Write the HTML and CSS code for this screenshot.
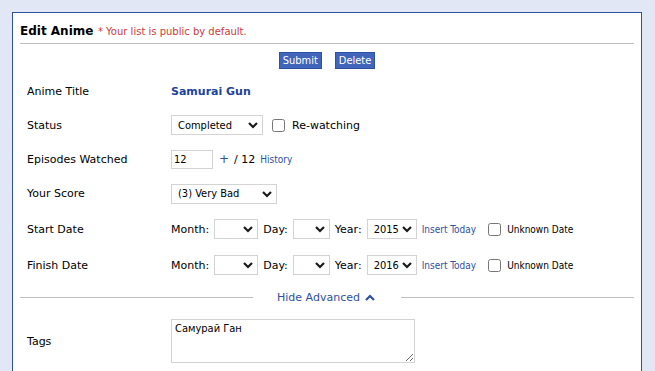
FILE: index.html
```html
<!DOCTYPE html>
<html lang="en">
<head>
  <meta charset="UTF-8">
  <meta name="viewport" content="width=device-width, initial-scale=1.0">
  <title>Edit Anime</title>
  <link rel="stylesheet" href="styles.css">
</head>
<body>
  <div class="panel">
    <div class="panel-head">
      <span class="panel-title">Edit Anime</span>
      <span class="notice">* Your list is public by default.</span>
    </div>

    <div class="actions">
      <button class="btn">Submit</button>
      <button class="btn">Delete</button>
    </div>

    <!-- Main fields -->
    <div class="row">
      <div class="label">Anime Title</div>
      <div class="value"><a class="anime-title" href="#">Samurai Gun</a></div>
    </div>
    <div class="row">
      <div class="label">Status</div>
      <div class="value">
        <span class="select w-status">
          <select><option>Completed</option></select>
          <svg class="caret" width="10" height="7" viewBox="0 0 10 7"><polyline points="1,1 5,5 9,1" /></svg>
        </span>
        <label class="check big"><input type="checkbox"> Re-watching</label>
      </div>
    </div>
    <div class="row">
      <div class="label">Episodes Watched</div>
      <div class="value">
        <input class="text-input" type="text" value="12">
        <a class="plus" href="#">+</a>
        <span>/ 12</span>
        <a class="small-link" href="#">History</a>
      </div>
    </div>
    <div class="row mid">
      <div class="label">Your Score</div>
      <div class="value">
        <span class="select w-score">
          <select><option>(3) Very Bad</option></select>
          <svg class="caret" width="10" height="7" viewBox="0 0 10 7"><polyline points="1,1 5,5 9,1" /></svg>
        </span>
      </div>
    </div>
    <div class="row tall">
      <div class="label">Start Date</div>
      <div class="value">
        <span>Month:</span>
        <span class="select w-month">
          <select><option></option></select>
          <svg class="caret" width="10" height="7" viewBox="0 0 10 7"><polyline points="1,1 5,5 9,1" /></svg>
        </span>
        <span>Day:</span>
        <span class="select w-day">
          <select><option></option></select>
          <svg class="caret" width="10" height="7" viewBox="0 0 10 7"><polyline points="1,1 5,5 9,1" /></svg>
        </span>
        <span>Year:</span>
        <span class="select w-year">
          <select><option>2015</option></select>
          <svg class="caret" width="10" height="7" viewBox="0 0 10 7"><polyline points="1,1 5,5 9,1" /></svg>
        </span>
        <a class="small-link" href="#">Insert Today</a>
        <label class="check"><input type="checkbox"> Unknown Date</label>
      </div>
    </div>
    <div class="row tall">
      <div class="label">Finish Date</div>
      <div class="value">
        <span>Month:</span>
        <span class="select w-month">
          <select><option></option></select>
          <svg class="caret" width="10" height="7" viewBox="0 0 10 7"><polyline points="1,1 5,5 9,1" /></svg>
        </span>
        <span>Day:</span>
        <span class="select w-day">
          <select><option></option></select>
          <svg class="caret" width="10" height="7" viewBox="0 0 10 7"><polyline points="1,1 5,5 9,1" /></svg>
        </span>
        <span>Year:</span>
        <span class="select w-year">
          <select><option>2016</option></select>
          <svg class="caret" width="10" height="7" viewBox="0 0 10 7"><polyline points="1,1 5,5 9,1" /></svg>
        </span>
        <a class="small-link" href="#">Insert Today</a>
        <label class="check"><input type="checkbox"> Unknown Date</label>
      </div>
    </div>

    <!-- Advanced toggle -->
    <div class="divider">
      <span class="divider-line"></span>
      <a class="toggle" href="#">Hide Advanced
        <svg width="10" height="7" viewBox="0 0 10 7"><polyline points="1,6 5,2 9,6" /></svg>
      </a>
      <span class="divider-line"></span>
    </div>

    <div class="row tags">
      <div class="label">Tags</div>
      <div class="value">
        <textarea class="tags-input">Самурай Ган</textarea>
      </div>
    </div>
  </div>
</body>
</html>
```

FILE: styles.css
```css
html, body {
  height: 100%;
}
body {
  margin: 0;
  overflow: hidden;
  background-color: #e1e7f5;
  font-family: Verdana, "DejaVu Sans", sans-serif;
  font-size: 11px;
  color: #000;
}
a {
  text-decoration: none;
  color: #1d439b;
}
.panel {
  margin: 12px 13px 0 12px;
  min-height: 100%;
  padding: 0 7px;
  background-color: #fff;
  border: 1px solid #2e51a2;
  border-bottom: none;
}
.panel-head {
  padding: 10px 0 3px;
  line-height: 16px;
  border-bottom: 1px solid #bebebe;
}
.panel-title {
  font-size: 12px;
  font-weight: bold;
}
.notice {
  margin-left: 1px;
  font-size: 10px;
  color: #cc3b3b;
}
.actions {
  display: flex;
  justify-content: center;
  gap: 13px;
  padding: 8px 0 5px;
}
.btn {
  height: 17px;
  padding: 0 3px;
  font-family: Tahoma, "DejaVu Sans Condensed", "Liberation Sans", sans-serif;
  font-size: 11px;
  color: #fff;
  background-color: #4165ba;
  border: 1px solid #2e51a2;
  cursor: pointer;
}
.row {
  display: flex;
  align-items: center;
  height: 34px;
  padding-left: 7px;
}
.row.mid {
  height: 35px;
}
.row.tall {
  height: 36px;
}
.label {
  width: 144px;
  flex-shrink: 0;
}
.value {
  display: flex;
  align-items: center;
  gap: 5px;
}
.anime-title {
  font-weight: bold;
}
.select {
  position: relative;
  display: inline-block;
}
.select select {
  appearance: none;
  -webkit-appearance: none;
  display: block;
  height: 20px;
  padding: 0 16px 0 6px;
  font-family: Tahoma, "DejaVu Sans Condensed", "Liberation Sans", sans-serif;
  font-size: 11px;
  color: #000;
  background-color: #fff;
  border: 1px solid #d3d3d3;
  border-radius: 0;
}
.caret {
  position: absolute;
  right: 5px;
  top: 7px;
  pointer-events: none;
}
.caret polyline {
  fill: none;
  stroke: #1a1a1a;
  stroke-width: 2.2;
}
.w-status select { width: 92px; }
.w-score select { width: 106px; }
.w-month select { width: 44px; }
.w-day select { width: 37px; }
.w-year select { width: 50px; }
.check {
  display: flex;
  align-items: center;
  gap: 6px;
  font-family: Tahoma, "DejaVu Sans Condensed", "Liberation Sans", sans-serif;
  font-size: 10px;
}
.check input {
  width: 13px;
  height: 13px;
  margin: 0 0 0 7px;
}
.check.big {
  gap: 7px;
  font-family: Verdana, "DejaVu Sans", sans-serif;
  font-size: 11px;
}
.check.big input {
  margin-left: 4px;
}
.text-input {
  width: 42px;
  height: 19px;
  box-sizing: border-box;
  padding: 0 2px;
  font-family: Tahoma, "DejaVu Sans Condensed", "Liberation Sans", sans-serif;
  font-size: 11px;
  border: 1px solid #d3d3d3;
}
.plus {
  margin-left: 1px;
  font-size: 12px;
  color: #2e51a2;
}
.small-link {
  font-family: Tahoma, "DejaVu Sans Condensed", "Liberation Sans", sans-serif;
  font-size: 10px;
  color: #2e51a2;
}
.divider {
  display: flex;
  align-items: center;
  height: 28px;
}
.divider-line {
  flex: 1;
  border-top: 1px solid #bebebe;
}
.toggle {
  display: flex;
  align-items: center;
  gap: 5px;
  padding: 0 26px 0 24px;
  color: #2e51a2;
}
.toggle polyline {
  fill: none;
  stroke: #2e51a2;
  stroke-width: 2.2;
}
.row.tags {
  height: 60px;
}
.tags-input {
  width: 244px;
  height: 44px;
  box-sizing: border-box;
  padding: 2px 3px;
  font-family: Tahoma, "DejaVu Sans Condensed", "Liberation Sans", sans-serif;
  font-size: 11px;
  border: 1px solid #d3d3d3;
}
```
